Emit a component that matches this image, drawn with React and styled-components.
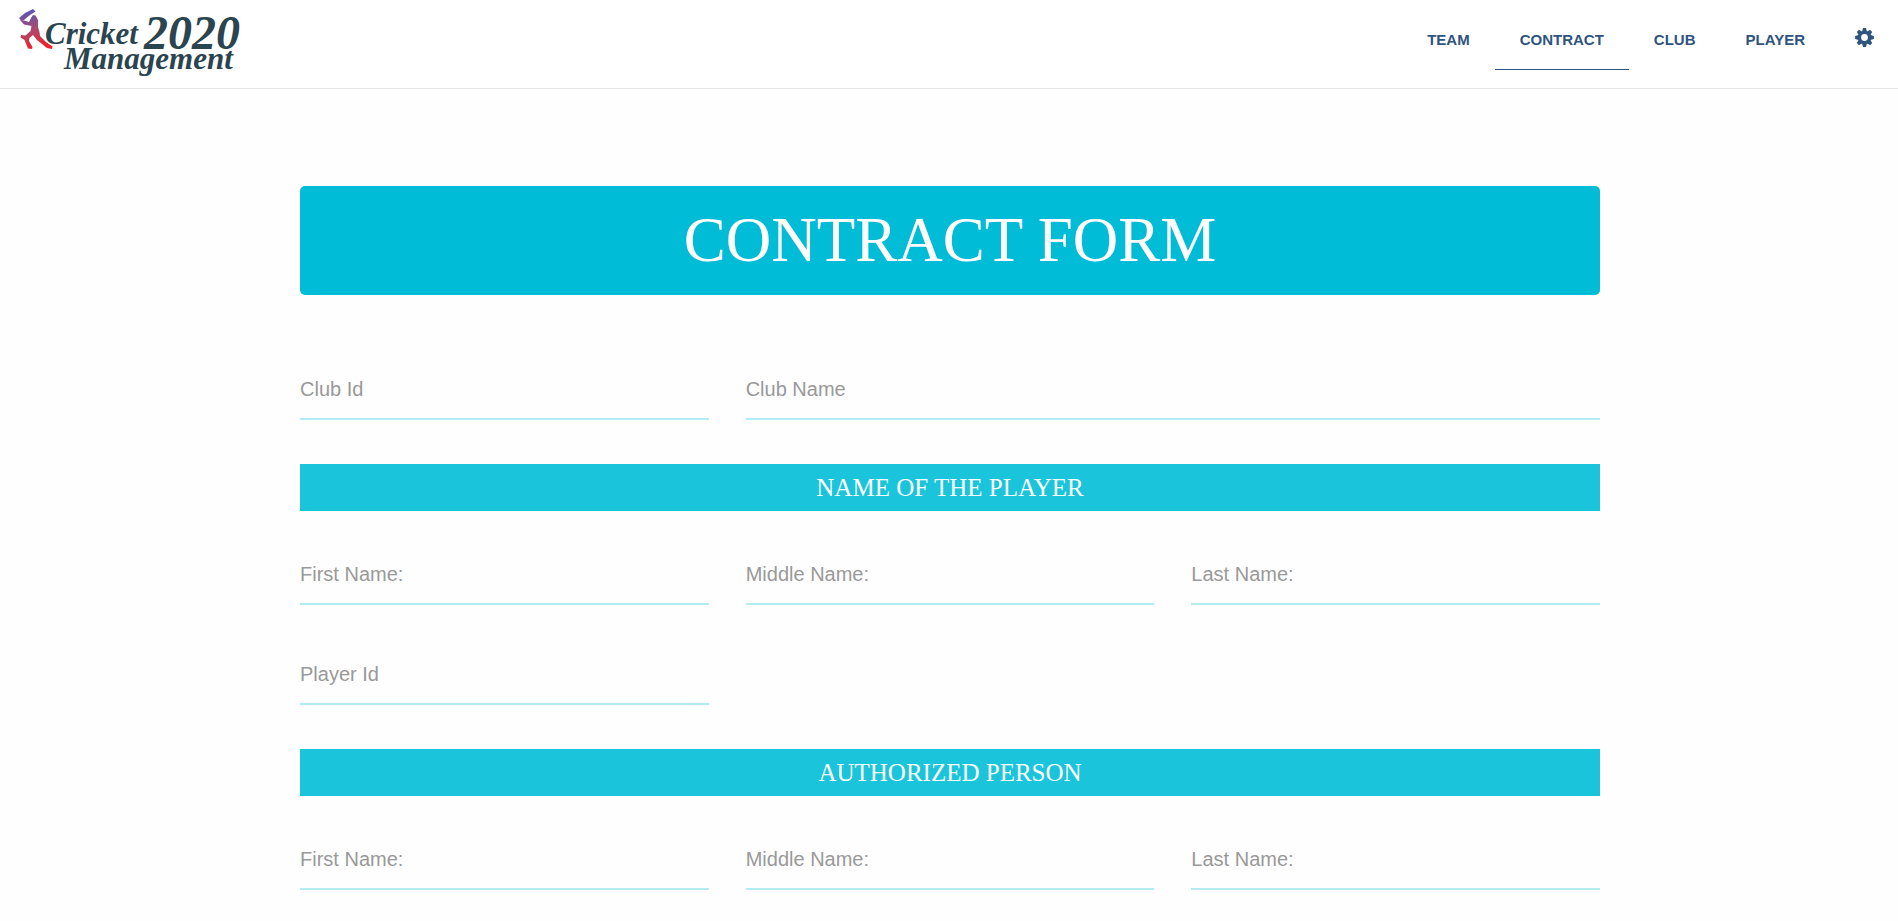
import React from "react";
import styled, { createGlobalStyle } from "styled-components";

const GlobalStyle = createGlobalStyle`
  *, *::before, *::after { box-sizing: border-box; }
  body {
    margin: 0;
    background: #fefefe;
    font-family: "Liberation Sans", Arial, sans-serif;
  }
`;

const Header = styled.header`
  display: flex;
  justify-content: space-between;
  align-items: flex-start;
  height: 89px;
  background: #fff;
  border-bottom: 1px solid #e5e5e5;
`;

const Brand = styled.a`
  display: block;
  padding-left: 16px;
`;

const LogoArt = styled.svg`
  display: block;
  width: 240px;
  height: 84px;
`;

const LogoText = styled.text`
  font-family: "Liberation Serif", "Times New Roman", serif;
  font-size: ${(p) => p.$size}px;
  font-weight: bold;
  font-style: italic;
  fill: #2a4450;
`;

const Nav = styled.nav`
  display: flex;
  padding-right: 22px;
`;

const NavLink = styled.a`
  display: flex;
  align-items: center;
  height: 70px;
  padding: ${(p) => (p.$icon ? "6px 2px 0 25px" : "10px 25px 0")};
  border-bottom: 1px solid ${(p) => (p.$active ? "#2f5480" : "transparent")};
  color: #2f5480;
  font-size: 15px;
  font-weight: bold;
  line-height: 18px;
  text-decoration: none;
  text-transform: uppercase;
`;

const GearIcon = styled.svg`
  display: block;
  width: 19px;
  height: 19px;
  fill: #2f5480;
`;

const Main = styled.main`
  padding: 97px 24px 0 26px;
`;

const Form = styled.form`
  max-width: 1300px;
  margin: 0 auto;
`;

const Title = styled.h1`
  margin: 0 0 75px;
  padding: 18px 16px 19px;
  border-radius: 5px;
  background: #00bcd7;
  color: #fff;
  font-family: "Liberation Serif", "Times New Roman", serif;
  font-size: 63px;
  font-weight: normal;
  line-height: 72px;
  text-align: center;
`;

const SectionTitle = styled.h2`
  margin: 44px 0;
  padding: 8px 16px;
  background: #1ac4da;
  color: #fff;
  font-family: "Liberation Serif", "Times New Roman", serif;
  font-size: 25px;
  font-weight: normal;
  line-height: 31px;
  text-align: center;
`;

const Row = styled.div`
  display: grid;
  grid-template-columns: repeat(3, minmax(0, 1fr));
  column-gap: 37px;

  & + & {
    margin-top: 50px;
  }
`;

const Field = styled.input`
  grid-column: span ${(p) => p.$span || 1};
  width: 100%;
  height: 50px;
  padding: 0 0 10px;
  border: 0;
  border-bottom: 2px solid #b2ebf2;
  border-radius: 0;
  outline: 0;
  background: transparent;
  color: #333;
  font-family: inherit;
  font-size: 20px;

  &::placeholder {
    color: #999;
    opacity: 1;
  }
`;

function Logo() {
  return (
    <LogoArt viewBox="16 0 240 84" role="img" aria-label="Cricket 2020 Management">
      <defs>
        <linearGradient id="batter" gradientUnits="userSpaceOnUse" x1="28" y1="9" x2="38" y2="49">
          <stop offset="0" stopColor="#5555bb" />
          <stop offset="0.5" stopColor="#a94a70" />
          <stop offset="1" stopColor="#f21f26" />
        </linearGradient>
      </defs>
      <g fill="url(#batter)">
        <path d="M33 9L35.500 11.500L30 15L24 20L21.500 21L19 18L25 13Z" />
        <path d="M20 20L24 20.500L29 22L31 18L33 15L35.500 15.500L38 20L38 27L39.500 32L40 36L46 42L52.500 46.500L52 49L47 48L37 40L33 35L29.500 38L29 41L32.500 47L32 49L28 48.500L24.500 40L20.500 37.500L21 35L25.500 35.500L30.500 31L31.500 26L24 24.500Z" />
      </g>
      <LogoText $size={31} x="45" y="44">Cricket</LogoText>
      <LogoText $size={48} x="144" y="49">2020</LogoText>
      <LogoText $size={31} x="64" y="69">Management</LogoText>
    </LogoArt>
  );
}

const TOOTH_ANGLES = [0, 45, 90, 135, 180, 225, 270, 315];

function Gear() {
  return (
    <GearIcon viewBox="-9.500 -9.500 19 19" aria-hidden="true">
      <circle r="5.100" fill="none" stroke="#2f5480" strokeWidth="3.400" />
      {TOOTH_ANGLES.map((angle) => (
        <path key={angle} d="M-2.400 -5.800L-1.500 -9.400H1.500L2.400 -5.800Z" transform={`rotate(${angle})`} />
      ))}
    </GearIcon>
  );
}

const NAME_PARTS = ["First Name:", "Middle Name:", "Last Name:"];

function NameRow({ owner }) {
  return (
    <Row>
      {NAME_PARTS.map((part) => (
        <Field key={part} type="text" placeholder={part} aria-label={`${owner} ${part}`} />
      ))}
    </Row>
  );
}

export default function App() {
  return (
    <>
      <GlobalStyle />
      <Header>
        <Brand href="#home">
          <Logo />
        </Brand>
        <Nav>
          <NavLink href="#team">Team</NavLink>
          <NavLink href="#contract" $active aria-current="page">Contract</NavLink>
          <NavLink href="#club">Club</NavLink>
          <NavLink href="#player">Player</NavLink>
          <NavLink href="#settings" $icon aria-label="Settings">
            <Gear />
          </NavLink>
        </Nav>
      </Header>
      <Main>
        <Form>
          <Title>CONTRACT FORM</Title>
          <Row>
            <Field type="text" placeholder="Club Id" aria-label="Club Id" />
            <Field type="text" placeholder="Club Name" aria-label="Club Name" $span={2} />
          </Row>
          <SectionTitle>NAME OF THE PLAYER</SectionTitle>
          <NameRow owner="Player" />
          <Row>
            <Field type="text" placeholder="Player Id" aria-label="Player Id" />
          </Row>
          <SectionTitle>AUTHORIZED PERSON</SectionTitle>
          <NameRow owner="Authorized person" />
        </Form>
      </Main>
    </>
  );
}
